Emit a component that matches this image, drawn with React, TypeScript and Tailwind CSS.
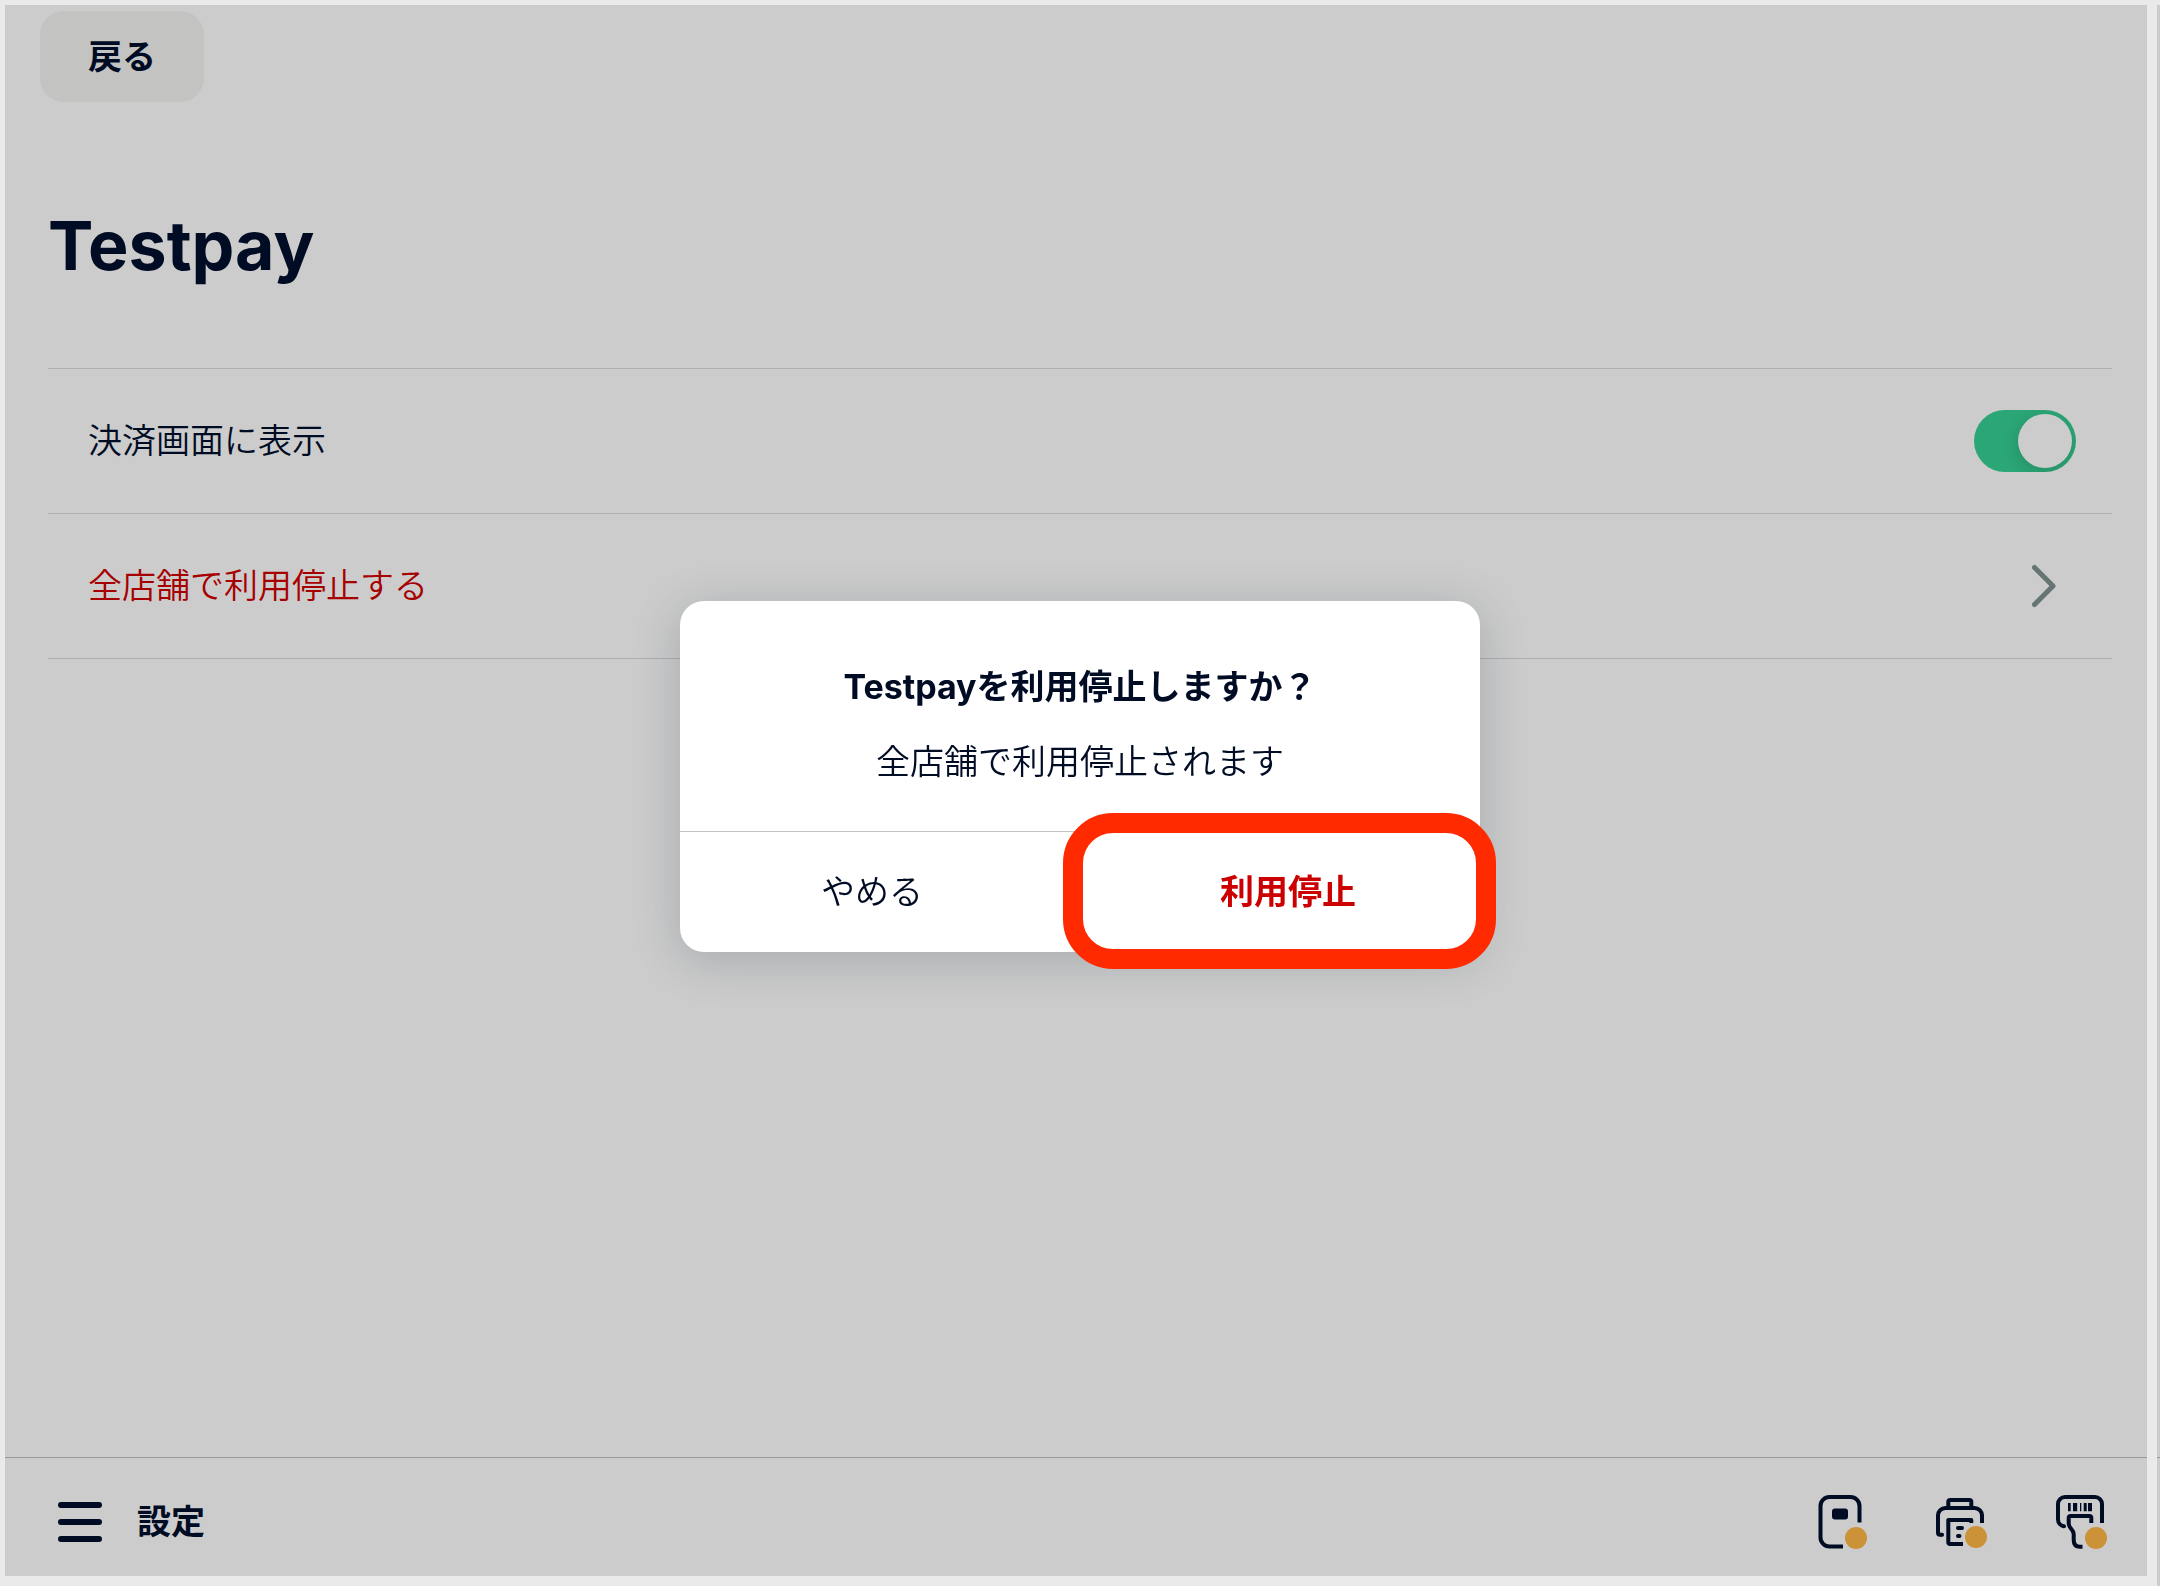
import React, { useState } from "react";

function MenuIcon() {
  return (
    <svg className="h-11 w-11" viewBox="0 0 44 44" stroke="currentColor" strokeWidth="6" strokeLinecap="round" aria-hidden="true">
      <path d="M3 5H41M3 22H41M3 39H41" />
    </svg>
  );
}

function ChevronIcon() {
  return (
    <svg className="h-11 w-6" viewBox="0 0 24 44" fill="none" stroke="currentColor" strokeWidth="5" strokeLinecap="round" strokeLinejoin="round" aria-hidden="true">
      <path d="M2.5 3.5L21 22L2.5 40.5" />
    </svg>
  );
}

function DeviceIcon({ dotY, children }: { dotY: number; children: React.ReactNode }) {
  return (
    <svg className="h-16 w-[60px]" viewBox="0 5 60 64" fill="none" stroke="currentColor" strokeWidth="4" strokeLinejoin="round" aria-hidden="true">
      {children}
      <circle cx="44" cy={dotY} r="11" fill="#cc9238" stroke="none" />
    </svg>
  );
}

function TerminalIcon() {
  return (
    <DeviceIcon dotY={53}>
      <path d="M47.5 37.5V21a9 9 0 0 0-9-9H17.5a9 9 0 0 0-9 9v31.5a9 9 0 0 0 9 9H31" />
      <rect x="20" y="23.5" width="16" height="11" rx="3" fill="currentColor" stroke="none" />
    </DeviceIcon>
  );
}

function PrinterIcon() {
  return (
    <DeviceIcon dotY={52}>
      <path d="M16.3 22.5V17a2 2 0 0 1 2-2h19a2 2 0 0 1 2 2v5.5" />
      <path d="M10 49.7H8a2 2 0 0 1-2-2V30.5a7.5 7.5 0 0 1 7.5-7.5h29a7.5 7.5 0 0 1 7.5 7.5V38" />
      <path d="M10 49.7H10.1M26 43H30M26 51H27.5" strokeLinecap="round" />
      <path d="M39.3 38V35H16.3V57.5a1.5 1.5 0 0 0 1.5 1.5H31" />
    </DeviceIcon>
  );
}

function ScannerIcon() {
  return (
    <DeviceIcon dotY={53}>
      <path d="M50 38V19a7 7 0 0 0-7-7H13a7 7 0 0 0-7 7v15.5a7 7 0 0 0 6 6.8" />
      <path d="M11.9 41.3H12" strokeLinecap="round" />
      <path d="M39.3 38V33a2 2 0 0 0-2-2H18.7a2 2 0 0 0-2 2v5c0 2.5.8 4 2.3 5.6c1.7 1.8 2.7 3.2 2.7 5.7V55c0 4.5 2.5 6.7 6.3 6.7h2.5" />
      <path d="M16 18h2.7v8.3H16zM21 18h4.2v8.3H21zM28 18h1.3v8.3H28zM31.7 18h3v8.3h-3zM36 18h4v8.3h-4z" fill="currentColor" stroke="none" />
    </DeviceIcon>
  );
}

export default function App() {
  const [shown, setShown] = useState(true);

  return (
    <div lang="ja" className="flex min-h-screen bg-[#eaeaea] pt-[5px] pl-[5px] font-['Inter','Noto_Sans_CJK_JP',sans-serif] text-[34px] leading-[50px] text-[#000b24]">
      <div className="mb-2.5 flex flex-1 flex-col bg-[#cccccc]">
        <header className="pt-1.5 pl-[35px]">
          <button type="button" className="h-[91px] rounded-3xl bg-[#c3c3c1] px-12 font-bold">
            戻る
          </button>
        </header>

        <main className="flex-1 pr-[35px] pl-[43px]">
          <h1 className="pt-[99px] pb-[79px] text-[68px] leading-[88px] font-bold">Testpay</h1>
          <ul className="divide-y divide-[#b0b0b0] border-y border-[#b0b0b0]">
            <li>
              <label className="flex h-36 items-center justify-between pr-9 pl-10">
                <span className="font-[350]">決済画面に表示</span>
                <input
                  type="checkbox"
                  role="switch"
                  checked={shown}
                  onChange={(e) => setShown(e.target.checked)}
                  className="peer sr-only"
                />
                <span className="flex h-[62px] w-[102px] items-center overflow-hidden rounded-full bg-[#999999] p-1 peer-checked:justify-end peer-checked:bg-[#2ba676]">
                  <span className="size-[54px] rounded-full bg-[#cccccc] shadow-[0_4px_16px_rgba(0,0,0,0.15)]" />
                </span>
              </label>
            </li>
            <li>
              <button type="button" className="flex h-36 w-full items-center justify-between pr-14 pl-10 font-[350] text-[#a60000]">
                全店舗で利用停止する
                <span className="text-[#667473]">
                  <ChevronIcon />
                </span>
              </button>
            </li>
          </ul>
        </main>

        <footer className="flex h-[119px] items-center justify-between border-t border-[#999999] pt-2.5 pr-[35px] pl-[53px]">
          <button type="button" className="flex items-center gap-[35px] font-bold">
            <MenuIcon />
            設定
          </button>
          <div className="flex gap-[60px]">
            <button type="button" aria-label="決済端末"><TerminalIcon /></button>
            <button type="button" aria-label="プリンター"><PrinterIcon /></button>
            <button type="button" aria-label="スキャナー"><ScannerIcon /></button>
          </div>
        </footer>
      </div>
      <div className="w-2.5" />
      <div className="flex w-[3px] flex-col bg-[#cccccc]">
        <div className="flex-1" />
        <div className="h-[129px] border-t border-[#999999]" />
      </div>

      <div className="fixed inset-0 flex items-center justify-center pb-[34px]">
        <section
          role="dialog"
          aria-modal="true"
          aria-labelledby="dialog-title"
          className="w-[800px] rounded-3xl bg-white text-center shadow-[0_8px_48px_rgba(16,32,44,0.2)]"
        >
          <div className="flex flex-col gap-[25px] pt-[61px] pb-11">
            <h2 id="dialog-title" className="font-bold">Testpayを利用停止しますか？</h2>
            <p className="font-[350]">全店舗で利用停止されます</p>
          </div>
          <div className="grid h-[121px] grid-cols-2 gap-8 border-t border-[#c4c4c4]">
            <button type="button" className="font-[350]">やめる</button>
            <button type="button" className="relative font-bold text-[#cc0000]">
              利用停止
              <span className="pointer-events-none absolute -top-[19px] -right-4 -bottom-[17px] -left-[33px] rounded-[50px] border-[20px] border-[#ff2a00]" />
            </button>
          </div>
        </section>
      </div>
    </div>
  );
}
